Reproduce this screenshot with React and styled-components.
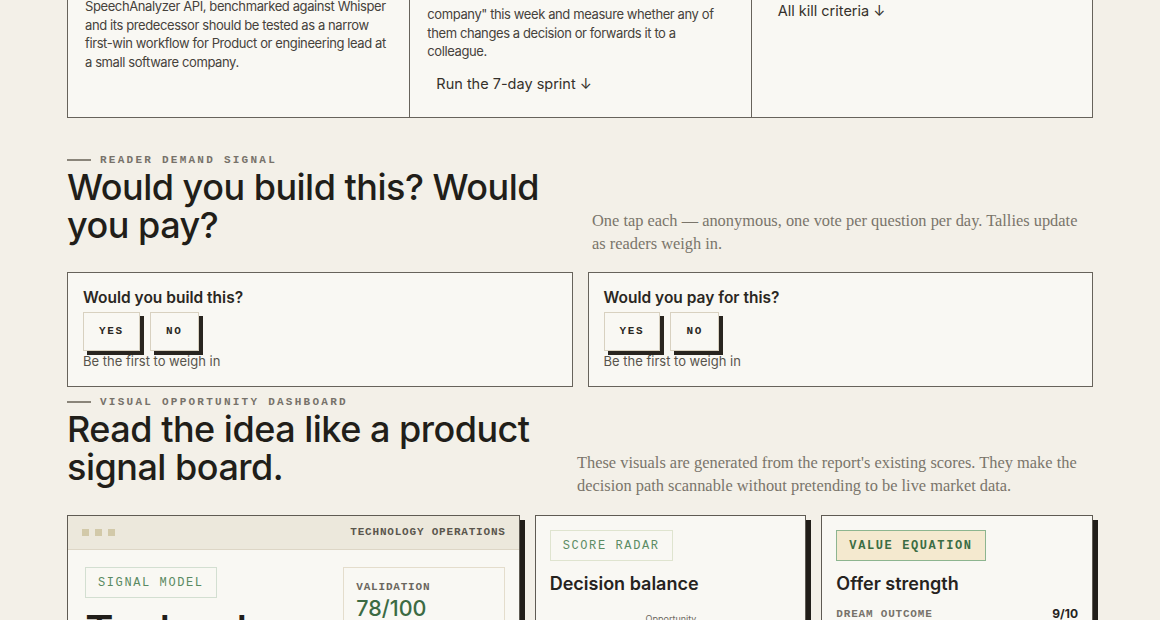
import React from "react";
import styled, { createGlobalStyle } from "styled-components";

const sans = `"Inter", "Liberation Sans", sans-serif`;
const mono = `"Liberation Mono", "DejaVu Sans Mono", monospace`;
const serif = `"Liberation Serif", "DejaVu Serif", serif`;

const GlobalStyle = createGlobalStyle`
  html, body {
    margin: 0;
    background: #f3f0e8;
  }
  body {
    font-family: ${sans};
    color: #26231e;
    overflow: hidden;
  }
  * {
    box-sizing: border-box;
  }
`;

const Page = styled.main`
  width: 1026px;
  margin: 0 auto;
`;

/* top strip: tail end of the three brief cards */
const Strip = styled.div`
  display: grid;
  grid-template-columns: repeat(3, 1fr);
  margin-top: -20px;
  border: 1px solid #67635b;
  background: #f9f8f3;
`;

const Cell = styled.div`
  display: flex;
  flex-direction: column;
  align-items: flex-start;
  padding: ${(p) => p.$top}px 17px 15px;
  & + & {
    border-left: 1px solid #67635b;
  }
`;

const Body = styled.p`
  margin: 0;
  font-size: 13px;
  line-height: 18.5px;
  letter-spacing: -0.4px;
  color: #46423b;
`;

const JumpLink = styled.a`
  display: inline-block;
  margin-top: ${(p) => (p.$first ? 0 : 5)}px;
  padding: 8px 9px;
  font-size: 14.5px;
  line-height: 20px;
  color: #35312b;
  text-decoration: none;
`;

const SectionHead = styled.header`
  display: grid;
  grid-template-columns: 1fr ${(p) => p.$side}px;
  align-items: end;
  margin: ${(p) => p.$top}px 0 ${(p) => p.$bottom}px;
`;

const Kicker = styled.div`
  display: flex;
  align-items: center;
  gap: 9px;
  font: 700 11px/15px ${mono};
  letter-spacing: 2.25px;
  text-transform: uppercase;
  color: #77726a;
  &::before {
    content: "";
    width: 24px;
    height: 1.5px;
    background: #8a857a;
  }
`;

const Headline = styled.h2`
  margin: 0 0 12px;
  font-size: 36px;
  line-height: 38px;
  font-weight: 500;
  letter-spacing: -0.5px;
  color: #211e19;
`;

const Lede = styled.p`
  margin: 0;
  max-width: ${(p) => p.$measure || "none"};
  font-family: ${serif};
  font-size: 16.4px;
  line-height: 23.5px;
  color: #7a756b;
`;

const PollGrid = styled.div`
  display: grid;
  grid-template-columns: 1fr 1fr;
  gap: 15px;
`;

const Poll = styled.section`
  border: 1px solid #67635b;
  background: #f9f8f3;
  padding: 15px 15px 16px;
`;

const PollQuestion = styled.h3`
  margin: 0 0 4px;
  font-size: 15.5px;
  line-height: 20px;
  font-weight: 600;
  color: #2a2722;
`;

const VoteRow = styled.div`
  display: flex;
  gap: 10px;
`;

const VoteButton = styled.button`
  height: 39px;
  padding: 0 15px;
  border: 1px solid #d8d1c0;
  background: #f9f8f3;
  box-shadow: 4px 4px 0 #29251f;
  font: 700 11px ${mono};
  letter-spacing: 1.7px;
  color: #2a2722;
  cursor: pointer;
`;

const PollNote = styled.div`
  margin-top: 1px;
  font-size: 13px;
  line-height: 18px;
  color: #58544c;
`;

const Board = styled.div`
  display: grid;
  grid-template-columns: 5fr 3fr 3fr;
  gap: 15px;
  align-items: start;
`;

const Panel = styled.article`
  border: 1px solid #5f5b53;
  background: #f9f8f3;
  box-shadow: 5px 5px 0 #211e19;
  height: 260px;
  overflow: hidden;
`;

const PanelBar = styled.div`
  display: flex;
  align-items: center;
  justify-content: space-between;
  height: 34px;
  padding: 0 13px 0 14px;
  background: #ece8dc;
  border-bottom: 1px solid #ddd6c6;
`;

const Dots = styled.div`
  display: flex;
  gap: 6px;
  span {
    width: 7px;
    height: 7px;
    background: #d2c9a9;
  }
`;

const MonoLabel = styled.div`
  font: 700 11px/14px ${mono};
  letter-spacing: 0.8px;
  text-transform: uppercase;
  color: ${(p) => p.$color || "#5a564d"};
`;

const PanelBody = styled.div`
  padding: ${(p) => p.$pad}px;
`;

const SplitBody = styled(PanelBody)`
  display: grid;
  grid-template-columns: 1fr 162px;
  gap: 20px;
  align-items: start;
`;

const chipTones = {
  plain: { color: "#5a8a62", border: "#d3dfd1", bg: "transparent", weight: 400 },
  soft: { color: "#5c8c64", border: "#dfe4cf", bg: "transparent", weight: 400 },
  strong: { color: "#3b6d44", border: "#8db58f", bg: "#f4e9cf", weight: 700 },
};

const Chip = styled.span`
  display: inline-flex;
  align-items: center;
  height: 31px;
  padding: 2px 12px 0;
  font: ${(p) => chipTones[p.$tone].weight} 12px ${mono};
  letter-spacing: 1.6px;
  text-transform: uppercase;
  color: ${(p) => chipTones[p.$tone].color};
  border: 1px solid ${(p) => chipTones[p.$tone].border};
  background: ${(p) => chipTones[p.$tone].bg};
`;

const BigTitle = styled.h3`
  margin: 10px 0 0;
  font-size: 44px;
  line-height: 46px;
  font-weight: 500;
  letter-spacing: -0.8px;
  color: #211e19;
`;

const ScoreBox = styled.div`
  border: 1px solid #e4ddcc;
  padding: 12px;
`;

const ScoreValue = styled.div`
  font-size: 21.5px;
  line-height: 28px;
  font-weight: 500;
  color: #3c6b43;
`;

const PanelTitle = styled.h3`
  margin: 12px 0 0;
  font-size: 18px;
  line-height: 22px;
  font-weight: 600;
  color: #26231e;
`;

const Radar = styled.svg`
  display: block;
  margin: 15px auto 0;
`;

const MetricRow = styled.div`
  display: flex;
  justify-content: space-between;
  align-items: center;
  margin-top: 12px;
`;

const MetricValue = styled.span`
  font-size: 12px;
  line-height: 14px;
  font-weight: 700;
  color: #26231e;
`;

const Track = styled.div`
  height: 8px;
  margin-top: 6px;
  background: #ebe6d8;
  span {
    display: block;
    height: 100%;
    background: #3c6b43;
  }
`;

const metrics = [
  { label: "Dream outcome", value: 9 },
  { label: "Likelihood", value: 7 },
  { label: "Time delay", value: 6 },
  { label: "Effort", value: 5 },
];

const polls = ["Would you build this?", "Would you pay for this?"];

const radarAxes = ["Opportunity", "Problem", "Feasibility", "Why now", "Go-to-market"];
const radarScores = [0.8, 0.7, 0.75, 0.85, 0.6];

function point(i, r) {
  const a = -Math.PI / 2 + (i * 2 * Math.PI) / radarAxes.length;
  return [120 + Math.cos(a) * r, 100 + Math.sin(a) * r];
}

const RadarChart = () => (
  <Radar width="240" height="200" viewBox="0 0 240 200">
    {[1, 0.66, 0.33].map((s) => (
      <polygon
        key={s}
        points={radarAxes.map((_, i) => point(i, 72 * s).join(",")).join(" ")}
        fill="none"
        stroke="#ddd6c6"
      />
    ))}
    <polygon
      points={radarScores.map((v, i) => point(i, 72 * v).join(",")).join(" ")}
      fill="rgba(60,107,67,0.15)"
      stroke="#3c6b43"
      strokeWidth="1.5"
    />
    {radarAxes.map((name, i) => {
      const [x, y] = point(i, 86);
      return (
        <text
          key={name}
          x={x}
          y={i === 0 ? 12 : y}
          textAnchor="middle"
          fontSize="9"
          fill="#6d695f"
          fontFamily="Inter, sans-serif"
        >
          {name}
        </text>
      );
    })}
  </Radar>
);

export default function App() {
  return (
    <>
      <GlobalStyle />
      <Page>
        <Strip>
          <Cell $top={16}>
            <Body>
              SpeechAnalyzer API, benchmarked against Whisper and its
              predecessor should be tested as a narrow first-win workflow for
              Product or engineering lead at a small software company.
            </Body>
          </Cell>
          <Cell $top={24}>
            <Body>
              company" this week and measure whether any of them changes a
              decision or forwards it to a colleague.
            </Body>
            <JumpLink href="#sprint">Run the 7-day sprint ↓</JumpLink>
          </Cell>
          <Cell $top={12}>
            <JumpLink href="#kill" $first>
              All kill criteria ↓
            </JumpLink>
          </Cell>
        </Strip>

        <SectionHead $side={501} $top={35} $bottom={16}>
          <div>
            <Kicker>Reader demand signal</Kicker>
            <Headline>Would you build this? Would you pay?</Headline>
          </div>
          <Lede $measure="495px">
            One tap each — anonymous, one vote per question per day. Tallies
            update as readers weigh in.
          </Lede>
        </SectionHead>

        <PollGrid>
          {polls.map((q) => (
            <Poll key={q}>
              <PollQuestion>{q}</PollQuestion>
              <VoteRow>
                <VoteButton>YES</VoteButton>
                <VoteButton>NO</VoteButton>
              </VoteRow>
              <PollNote>Be the first to weigh in</PollNote>
            </Poll>
          ))}
        </PollGrid>

        <SectionHead $side={516} $top={8} $bottom={17}>
          <div>
            <Kicker>Visual opportunity dashboard</Kicker>
            <Headline>Read the idea like a product signal board.</Headline>
          </div>
          <Lede>
            These visuals are generated from the report's existing scores. They
            make the decision path scannable without pretending to be live
            market data.
          </Lede>
        </SectionHead>

        <Board>
          <Panel>
            <PanelBar>
              <Dots>
                <span />
                <span />
                <span />
              </Dots>
              <MonoLabel>Technology operations</MonoLabel>
            </PanelBar>
            <SplitBody $pad={17}>
              <div>
                <Chip $tone="plain">Signal model</Chip>
                <BigTitle>Technology operations</BigTitle>
              </div>
              <ScoreBox>
                <MonoLabel $color="#6b675e">Validation</MonoLabel>
                <ScoreValue>78/100</ScoreValue>
              </ScoreBox>
            </SplitBody>
          </Panel>

          <Panel>
            <PanelBody $pad={14}>
              <Chip $tone="soft">Score radar</Chip>
              <PanelTitle>Decision balance</PanelTitle>
              <RadarChart />
            </PanelBody>
          </Panel>

          <Panel>
            <PanelBody $pad={14}>
              <Chip $tone="strong">Value equation</Chip>
              <PanelTitle>Offer strength</PanelTitle>
              {metrics.map((m) => (
                <div key={m.label}>
                  <MetricRow>
                    <MonoLabel $color="#77726a">{m.label}</MonoLabel>
                    <MetricValue>{m.value}/10</MetricValue>
                  </MetricRow>
                  <Track>
                    <span style={{ width: `${m.value * 10}%` }} />
                  </Track>
                </div>
              ))}
            </PanelBody>
          </Panel>
        </Board>
      </Page>
    </>
  );
}
